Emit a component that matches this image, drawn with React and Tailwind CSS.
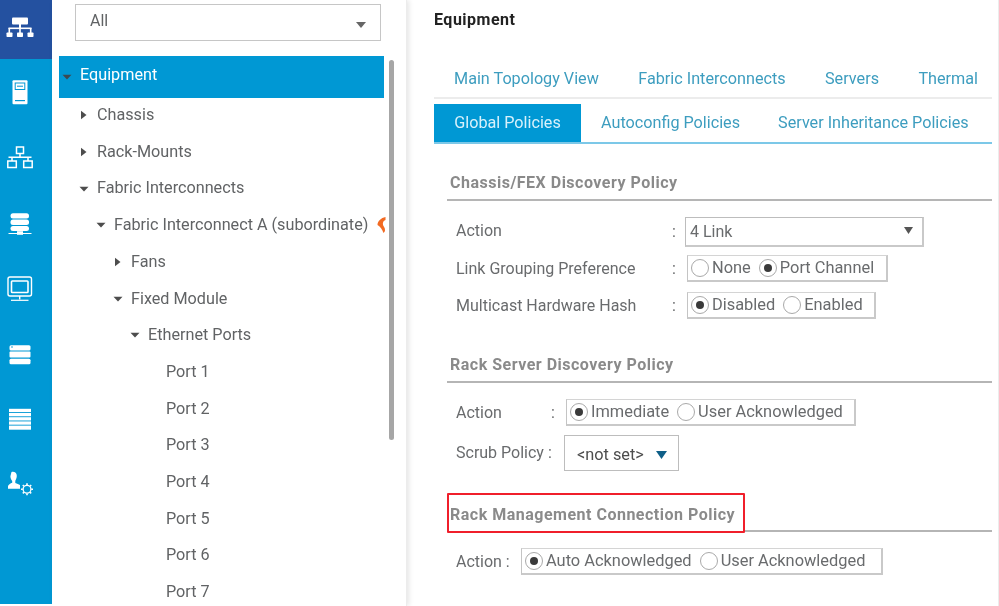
import React from "react";

const W = "#ffffff";
const B = "#0098d4";

const icons = [
  <g fill={W}>
    <rect x="12" y="7.5" width="16" height="7" rx="1" />
    <rect x="19" y="14" width="2" height="5" />
    <rect x="8.5" y="17.5" width="23" height="1.6" />
    <rect x="8.5" y="18" width="1.6" height="5" />
    <rect x="19.2" y="18" width="1.6" height="5" />
    <rect x="29.9" y="18" width="1.6" height="5" />
    <rect x="6.5" y="22.5" width="6" height="4.5" rx="0.8" />
    <rect x="17" y="22.5" width="6" height="4.5" rx="0.8" />
    <rect x="27.5" y="22.5" width="6" height="4.5" rx="0.8" />
  </g>,
  <g>
    <rect x="12.5" y="8.2" width="15" height="24" rx="1" fill={W} />
    <rect x="15.2" y="11" width="9.6" height="6.5" fill="none" stroke={B} strokeWidth="1" />
    <rect x="17" y="13.7" width="6" height="1" fill={B} />
    <rect x="15" y="28" width="10" height="1.2" fill={B} />
  </g>,
  <g fill="none" stroke={W} strokeWidth="1.5">
    <rect x="16.5" y="10" width="7" height="6.5" />
    <path d="M20 16.5V20M8.5 20.2H31.5M12 20V24M28 20V24" />
    <rect x="7.8" y="24" width="8.5" height="6.5" />
    <rect x="23.7" y="24" width="8.5" height="6.5" />
  </g>,
  <g fill={W}>
    <rect x="10.5" y="10.2" width="18.5" height="5.4" rx="2.5" />
    <rect x="10.5" y="16.6" width="18.5" height="5.4" rx="2.5" />
    <rect x="10.5" y="23" width="18.5" height="5" rx="2.5" />
    <rect x="8.5" y="30" width="23" height="1" />
    <rect x="17" y="28.2" width="6" height="3.6" />
  </g>,
  <g fill="none" stroke={W}>
    <rect x="8" y="9" width="23.5" height="19" rx="2" strokeWidth="1.4" />
    <rect x="11.5" y="13" width="16.5" height="11.5" rx="0.8" strokeWidth="1.6" />
    <path d="M19.7 28V31.5" strokeWidth="1.4" />
    <path d="M11 32.3H28.5" strokeWidth="1.2" />
  </g>,
  <g fill={W}>
    <rect x="9.5" y="11.2" width="21" height="5.2" rx="1.5" />
    <rect x="9.5" y="17.6" width="21" height="5.8" rx="1" />
    <rect x="9.5" y="24.8" width="21" height="5.5" rx="1.5" />
    <circle cx="12" cy="13" r="0.8" fill={B} />
  </g>,
  <g fill={W}>
    <rect x="9" y="9.8" width="22" height="3.3" />
    <rect x="9" y="14" width="22" height="3.3" />
    <rect x="9" y="18.2" width="22" height="3.3" />
    <rect x="9" y="22.4" width="22" height="3.3" />
    <rect x="9" y="26.6" width="22" height="4.1" />
  </g>,
  <g>
    <path fill={W} d="M11.5 7c2.800-.8 5.300.9 5.300 3.800 0 2.200-.8 3.800-1.500 4.900v2.200c1.800.8 3.400 1.400 4.700 2.200v3.700H8v-2.500c0-1.800 2.600-2.900 4.200-3.600v-1.800c-1.100-1.100-1.800-2.900-1.800-4.700z" />
    <circle cx="27" cy="24.2" r="3.900" fill="none" stroke={W} strokeWidth="1.300" />
    <path stroke={W} strokeWidth="1.600" d="M27 18.200V20M27 28.400V30.200M21 24.200H22.800M31.200 24.200H33M22.800 20L24 21.200M30 27.200L31.200 28.400M22.800 28.400L24 27.200M30 21.200L31.200 20" />
  </g>,
];

function Caret({ open, color = "#4d4d4d" }) {
  return (
    <svg width="10" height="10" viewBox="0 0 10 10" className="shrink-0">
      {open ? <path d="M.5 2.800H9.500L5 7.500Z" fill={color} /> : <path d="M2 .8V9.200L7.500 5Z" fill={color} />}
    </svg>
  );
}

function Row({ pad, caret, label, badge }) {
  return (
    <div className="flex h-[36.7px] items-center text-[16.2px] text-[#616365]" style={{ paddingLeft: pad }}>
      {caret ? <Caret open={caret === "open"} /> : null}
      <span className={caret ? "ml-[8px] whitespace-nowrap" : "whitespace-nowrap"}>{label}</span>
      {badge ? (
        <svg width="9" height="18" viewBox="0 0 9 18" className="ml-[9px] shrink-0">
          <path d="M8.500 1C4 2 .5 5 .5 9c2.500 1.500 4.500 4 6 8C8.500 15.500 8.500 13 6.800 10.500 5.200 8 5.800 5 8.500 4Z" fill="#f26a22" />
        </svg>
      ) : null}
    </div>
  );
}

function Radio({ on, label }) {
  return (
    <span className="flex items-center">
      <span className="flex h-[18px] w-[18px] shrink-0 items-center justify-center rounded-full border border-[#a9a9a9] bg-white">
        {on ? <span className="h-[8px] w-[8px] rounded-full bg-[#3a3a3a]" /> : null}
      </span>
      <span className="ml-[3px] whitespace-nowrap text-[16.4px] text-[#696b6d]">{label}</span>
    </span>
  );
}

function Group({ items, width }) {
  return (
    <div
      className="flex h-[27px] items-center gap-[8px] border-t border-l border-r-2 border-b-2 border-t-[#d4d4d4] border-l-[#c4c4c4] border-r-[#c9c9c9] border-b-[#c9c9c9] pl-[3px]"
      style={{ width }}
    >
      {items.map((i) => (
        <Radio key={i[0]} label={i[0]} on={i[1]} />
      ))}
    </div>
  );
}

function Heading({ children }) {
  return (
    <div className="flex h-[38px] items-center border-b-2 border-[#b5b5b5] pl-[3px] pt-[4px] text-[16px] font-bold tracking-[0.5px] text-[#8a8a8a]">
      {children}
    </div>
  );
}

function Field({ label, colonAt, children, className = "" }) {
  return (
    <div className={"flex items-center " + className}>
      <span className="ml-[9px] whitespace-nowrap text-[#696b6d]" style={{ width: colonAt }}>
        {label}
      </span>
      {children}
    </div>
  );
}

export default function App() {
  return (
    <div
      className="flex h-[606px] w-[999px] items-start overflow-hidden bg-white text-[16px] blur-[0.4px]"
      style={{ fontFamily: 'Roboto, "Liberation Sans", sans-serif' }}
    >
      <nav className="h-[604px] w-[52px] shrink-0 bg-[#0098d4]">
        {icons.map((ic, i) => (
          <div
            key={i}
            className={i === 0 ? "flex h-[59px] items-center bg-[#2451a0]" : "flex h-[65.5px] items-center"}
          >
            <svg width="40" height="40" viewBox="0 0 40 40">
              {ic}
            </svg>
          </div>
        ))}
      </nav>

      <aside className="relative h-[606px] w-[355px] shrink-0 border-r border-[#ececec] shadow-[2px_0_5px_rgba(0,0,0,0.10)]">
        <div className="ml-[23px] mt-[4px] flex h-[37px] w-[306px] items-center justify-between border border-[#c6c6c6] pl-[14px] pr-[13px] text-[#616365]">
          <span className="-mt-[4px]">All</span>
          <svg width="12" height="8" viewBox="0 0 12 8" className="mt-[5px]">
            <path d="M1 1H11L6 7Z" fill="#666" />
          </svg>
        </div>
        <div className="ml-[7px] mt-[15px] w-[325px]">
          <div className="mb-[-0.6px] flex h-[41.5px] items-center bg-[#0098d4] pl-[3px] text-[16.2px] text-white">
            <Caret open color="#3c4a52" />
            <span className="ml-[8px] -mt-[3px]">Equipment</span>
          </div>
          <Row pad={20} caret="closed" label="Chassis" />
          <Row pad={20} caret="closed" label="Rack-Mounts" />
          <Row pad={20} caret="open" label="Fabric Interconnects" />
          <Row pad={37} caret="open" label="Fabric Interconnect A (subordinate)" badge />
          <Row pad={54} caret="closed" label="Fans" />
          <Row pad={54} caret="open" label="Fixed Module" />
          <Row pad={71} caret="open" label="Ethernet Ports" />
          <Row pad={107} label="Port 1" />
          <Row pad={107} label="Port 2" />
          <Row pad={107} label="Port 3" />
          <Row pad={107} label="Port 4" />
          <Row pad={107} label="Port 5" />
          <Row pad={107} label="Port 6" />
          <Row pad={107} label="Port 7" />
        </div>
        <div className="absolute left-[337px] top-[60px] h-[380px] w-[5px] rounded-full bg-[#a6a6a6]" />
      </aside>

      <main className="h-[606px] w-[592px] shrink-0 border-r border-[#ececec]">
        <div className="ml-[27px] w-[558px]">
          <div className="flex h-[39px] items-center text-[16px] font-bold tracking-[0.5px] text-[#222]">Equipment</div>

          <div className="mt-[20px] flex h-[40px] items-center justify-between border-b-2 border-[#ececec] pl-[20px] pr-[14px] pt-[2px] text-[16.2px] text-[#3d9dbf]">
            <span className="whitespace-nowrap">Main Topology View</span>
            <span className="whitespace-nowrap">Fabric Interconnects</span>
            <span className="whitespace-nowrap">Servers</span>
            <span className="whitespace-nowrap">Thermal</span>
          </div>

          <div className="mt-[5px] flex h-[40px] items-stretch border-b-2 border-[#7cc8e8] text-[16.2px] text-[#3d9dbf]">
            <div className="flex w-[147px] items-center justify-center bg-[#0098d4] text-[#d8f1fb]">Global Policies</div>
            <div className="ml-[20px] flex items-center whitespace-nowrap">Autoconfig Policies</div>
            <div className="ml-[38px] flex items-center whitespace-nowrap">Server Inheritance Policies</div>
          </div>

          <div className="ml-[13px] mt-[19px]">
            <Heading>Chassis/FEX Discovery Policy</Heading>

            <div className="mt-[16px] flex h-[30px] items-center">
              <span className="ml-[9px] w-[216px] -mt-[2px] text-[#696b6d]">Action</span>
              <span className="w-[13px] text-[#696b6d]">:</span>
              <div className="flex h-[30px] w-[239px] items-center justify-between border-t border-l border-r-2 border-b-2 border-t-[#bdbdbd] border-l-[#bdbdbd] border-r-[#c9c9c9] border-b-[#c9c9c9] pl-[4px] pr-[9px] text-[#696b6d]">
                <span>4 Link</span>
                <svg width="9" height="7" viewBox="0 0 9 7" className="-mt-[3px]">
                  <path d="M0 0H9L4.500 7Z" fill="#555" />
                </svg>
              </div>
            </div>

            <Field label="Link Grouping Preference" colonAt={216} className="mt-[8px]">
              <span className="w-[15px] text-[#696b6d]">:</span>
              <Group width={201} items={[["None", false], ["Port Channel", true]]} />
            </Field>

            <Field label="Multicast Hardware Hash" colonAt={216} className="mt-[10px]">
              <span className="w-[15px] text-[#696b6d]">:</span>
              <Group width={189} items={[["Disabled", true], ["Enabled", false]]} />
            </Field>
          </div>

          <div className="ml-[13px] mt-[26px]">
            <Heading>Rack Server Discovery Policy</Heading>

            <Field label="Action" colonAt={95} className="mt-[16px]">
              <span className="w-[15px] text-[#696b6d]">:</span>
              <Group width={290} items={[["Immediate", true], ["User Acknowledged", false]]} />
            </Field>

            <Field label="Scrub Policy :" colonAt={108} className="mt-[9px]">
              <div className="flex h-[36px] w-[115px] items-center justify-between border border-[#bdbdbd] pl-[12px] pr-[11px] pt-[4px] text-[#4d4d4d]">
                <span className="whitespace-nowrap text-[16.3px]">&lt;not set&gt;</span>
                <svg width="11" height="8" viewBox="0 0 11 8">
                  <path d="M0 0H11L5.500 8Z" fill="#0f5f88" />
                </svg>
              </div>
            </Field>
          </div>

          <div className="ml-[13px] mt-[22px] flex items-end">
            <div className="flex h-[40px] w-[298px] shrink-0 items-center whitespace-nowrap rounded-[1px] border-2 border-[#f01f2b] pl-[1px] pt-[3px] text-[16px] font-bold tracking-[0.5px] text-[#8a8a8a]">
              Rack Management Connection Policy
            </div>
            <div className="mb-[1px] h-[2px] flex-1 bg-[#b5b5b5]" />
          </div>

          <Field label="Action :" colonAt={65} className="ml-[13px] mt-[15px]">
            <Group width={362} items={[["Auto Acknowledged", true], ["User Acknowledged", false]]} />
          </Field>
        </div>
      </main>
    </div>
  );
}
